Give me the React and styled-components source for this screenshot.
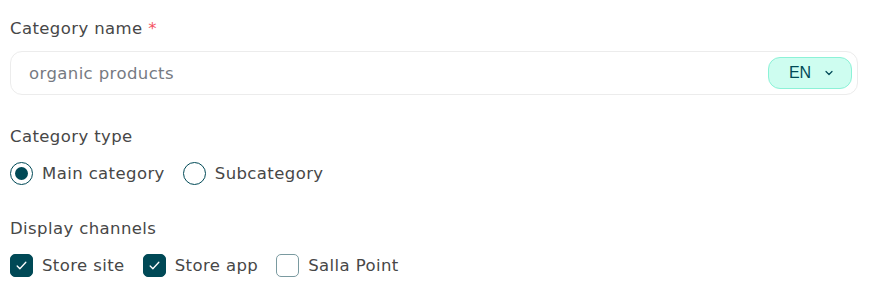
import React, { useState } from "react";
import styled, { createGlobalStyle } from "styled-components";

const GlobalStyle = createGlobalStyle`
  body {
    margin: 0;
    background: #fff;
    font-family: "DejaVu Sans", "Noto Sans", sans-serif;
    color: #444;
  }
`;

const App = () => {
  const [type, setType] = useState("main");
  const [channels, setChannels] = useState({ site: true, app: true, point: false });

  const toggle = (key) => setChannels({ ...channels, [key]: !channels[key] });

  return (
    <Form>
      <GlobalStyle />
      <Field>
        <Label>
          Category name <Required>*</Required>
        </Label>
        <InputBox>
          <TextInput placeholder="organic products" />
          <LangButton type="button">
            EN
            <svg width="12" height="12" viewBox="0 0 24 24" fill="none" stroke="#004956" strokeWidth="2.4" strokeLinecap="round" strokeLinejoin="round">
              <path d="M6 9l6 6 6-6" />
            </svg>
          </LangButton>
        </InputBox>
      </Field>

      <Field>
        <Label>Category type</Label>
        <OptionRow>
          <Option onClick={() => setType("main")}>
            <Radio checked={type === "main"} />
            Main category
          </Option>
          <Option onClick={() => setType("sub")}>
            <Radio checked={type === "sub"} />
            Subcategory
          </Option>
        </OptionRow>
      </Field>

      <Field>
        <Label>Display channels</Label>
        <OptionRow>
          <Option onClick={() => toggle("site")}>
            <Check checked={channels.site}>{channels.site && <Tick />}</Check>
            Store site
          </Option>
          <Option onClick={() => toggle("app")}>
            <Check checked={channels.app}>{channels.app && <Tick />}</Check>
            Store app
          </Option>
          <Option onClick={() => toggle("point")}>
            <Check checked={channels.point}>{channels.point && <Tick />}</Check>
            Salla Point
          </Option>
        </OptionRow>
      </Field>
    </Form>
  );
};

const Tick = () => (
  <svg width="13" height="13" viewBox="0 0 24 24" fill="none" stroke="#fff" strokeWidth="2.4" strokeLinecap="round" strokeLinejoin="round">
    <path d="M4 13l5 5L20 6" />
  </svg>
);

const Form = styled.div`
  width: 848px;
  padding: 17px 18px 0 10px;
  display: flex;
  flex-direction: column;
  gap: 30px;
`;

const Field = styled.div`
  display: flex;
  flex-direction: column;
  gap: 10px;
`;

const Label = styled.div`
  font-size: 16.5px;
  letter-spacing: 0.4px;
  line-height: 24px;
  color: #474747;
`;

const Required = styled.span`
  color: #f4525f;
`;

const InputBox = styled.div`
  height: 44px;
  box-sizing: border-box;
  border: 1px solid #ececec;
  border-radius: 12px;
  display: flex;
  align-items: center;
  padding: 0 5px 0 18px;
`;

const TextInput = styled.input`
  flex: 1;
  border: none;
  outline: none;
  background: transparent;
  padding: 0;
  font-family: inherit;
  font-size: 16.5px;
  letter-spacing: 0.4px;
  color: #444;
  &::placeholder {
    color: #767a82;
  }
`;

const LangButton = styled.button`
  width: 84px;
  height: 32px;
  box-sizing: border-box;
  background: #cefdf0;
  border: 1px solid #8cf2d7;
  border-radius: 12px;
  display: flex;
  align-items: center;
  justify-content: center;
  gap: 12px;
  font-family: "Liberation Sans", sans-serif;
  font-size: 16px;
  color: #004956;
  padding: 0 0 0 4px;
  cursor: pointer;
`;

const OptionRow = styled.div`
  height: 28px;
  display: flex;
  align-items: center;
  gap: 18px;
`;

const Option = styled.label`
  display: flex;
  align-items: center;
  gap: 9px;
  font-size: 16.5px;
  letter-spacing: 0.4px;
  color: #474747;
  cursor: pointer;
  user-select: none;
`;

const Radio = styled.span`
  width: 23px;
  height: 23px;
  box-sizing: border-box;
  border-radius: 50%;
  border: 1.5px solid #004956;
  display: flex;
  align-items: center;
  justify-content: center;
  &::after {
    content: "";
    width: 13px;
    height: 13px;
    border-radius: 50%;
    background: #004956;
    display: ${(p) => (p.checked ? "block" : "none")};
  }
`;

const Check = styled.span`
  width: 23px;
  height: 23px;
  box-sizing: border-box;
  border-radius: 5px;
  border: 1.5px solid ${(p) => (p.checked ? "#004956" : "#7a9aa0")};
  background: ${(p) => (p.checked ? "#004956" : "#fff")};
  display: flex;
  align-items: center;
  justify-content: center;
`;

export default App;
